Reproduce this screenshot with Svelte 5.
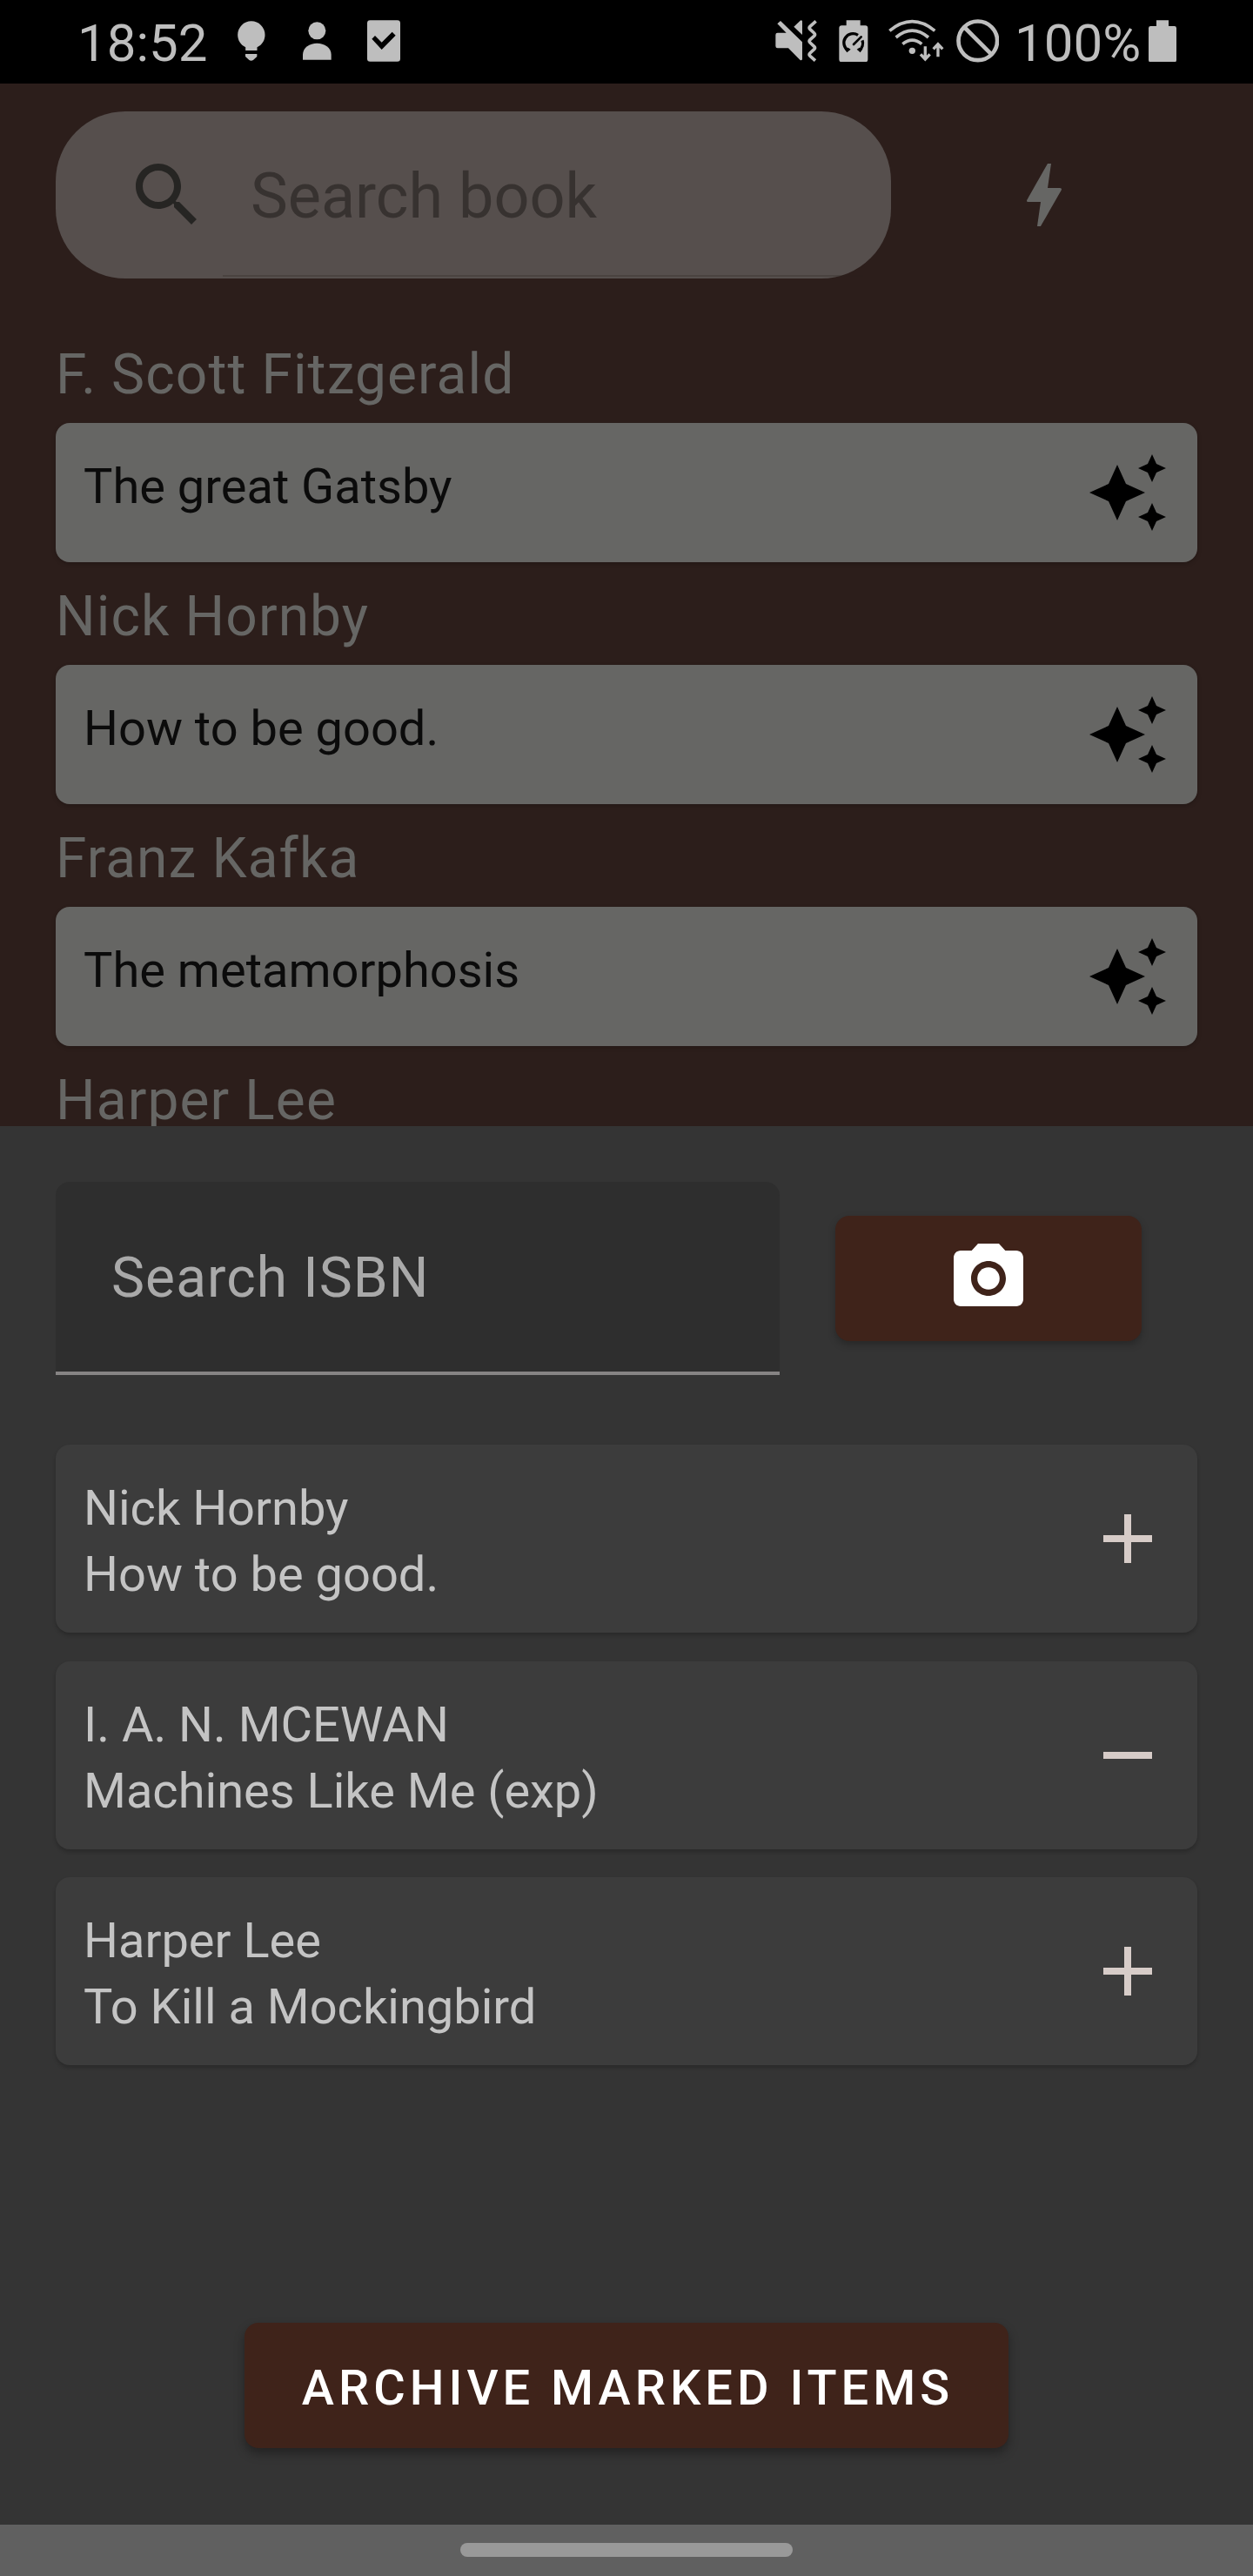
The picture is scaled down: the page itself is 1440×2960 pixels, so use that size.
<script>
  const shelf = [
    { author: 'F. Scott Fitzgerald', title: 'The great Gatsby' },
    { author: 'Nick Hornby', title: 'How to be good.' },
    { author: 'Franz Kafka', title: 'The metamorphosis' },
    { author: 'Harper Lee', title: null }
  ];

  const results = [
    { author: 'Nick Hornby', title: 'How to be good.', marked: false },
    { author: 'I. A. N. MCEWAN', title: 'Machines Like Me (exp)', marked: true },
    { author: 'Harper Lee', title: 'To Kill a Mockingbird', marked: false }
  ];
</script>

<div class="screen">
  <header class="status">
    <div class="status-left">
      <span class="clock">18:52</span>
      <svg class="bulb" viewBox="640 72 95 138">
        <path d="M687.500 73a47 47 0 0 1 47 47c0 18-9 34-27 43v11h-40v-11c-18-9-27-25-27-43a47 47 0 0 1 47-47zM667 186h40v9l-13 12q-7 5-14 0l-13-12z" />
      </svg>
      <svg class="person" viewBox="866 75 99 132">
        <circle cx="915" cy="106" r="30" />
        <path d="M866 206v-18c0-24 24-39 49-39s49 15 49 39v18z" />
      </svg>
      <svg class="check" viewBox="1086 69 114 144">
        <path fill-rule="evenodd" d="M1096 69.500h94q10 0 10 10v123q0 10-10 10h-94q-10 0-10-10v-123q0-10 10-10zM1102 134l11-11 23 23 36-36 12 12-48 49z" />
      </svg>
    </div>
    <div class="status-right">
      <svg class="mute" viewBox="93 67 148 147">
        <path d="M111 73l75 73v60q-3 5-8 1l-40-40h-37q-7 0-7-7v-39q0-7 7-7h30l-31-31zM157 93l22-21q5-3 7 2v47z" />
        <path class="line" stroke-width="11" stroke-linejoin="round" d="M233 74l-20 18q-5 5 0 10l14 13q5 5 0 10l-14 13q-5 5 0 10l14 13q5 5 0 10l-14 13q-5 5 0 10l18 16" />
      </svg>
      <svg class="saver" viewBox="313 68 101 146">
        <path d="M339 69h48v18h17q9 0 9 9v108q0 9-9 9h-81q-9 0-9-9V96q0-9 9-9h16z" />
        <g class="cut">
          <path stroke-width="10" d="M345 173a31 31 0 0 1 34-53M394 138a31 31 0 0 1-11 35" />
          <path stroke-width="8" stroke-linecap="round" d="M364 152l26-26" />
        </g>
        <path fill="#000" d="M333 168l8 12 13-11-9-6zM395 168l-8 12-12-11 9-6z" />
      </svg>
      <svg class="wifi" viewBox="483 67 193 147">
        <circle cx="565" cy="176" r="11" />
        <path class="line" stroke-width="11" d="M487 107q78-64 156 0M509 130q56-47 112 0M532 153q33-27 66 0" />
        <path class="line" stroke-width="10" d="M610 161v44M594 188l16 17 16-17M654 197v-43M638 170l16-17 16 17" />
      </svg>
      <svg class="block" viewBox="716 66 149 149">
        <circle class="line" cx="790.500" cy="140.500" r="67" stroke-width="14" />
        <path class="line" stroke-width="14" d="M743 93l95 95" />
      </svg>
      <span class="percent">100%</span>
      <svg class="battery" viewBox="1380 68 96 146">
        <path d="M1407 69h42v20h20q7 0 7 7v110q0 7-7 7h-82q-7 0-7-7V96q0-7 7-7h20z" />
      </svg>
    </div>
  </header>

  <main class="library">
    <div class="toolbar">
      <div class="search">
        <svg class="icon" viewBox="0 0 24 24">
          <path d="M15.500 14h-.79l-.28-.27C15.410 12.590 16 11.110 16 9.500 16 5.910 13.090 3 9.500 3S3 5.910 3 9.500 5.910 16 9.500 16c1.610 0 3.090-.59 4.230-1.570l.27.28v.79l5 4.990L20.490 19l-4.990-5zm-6 0C7.010 14 5 11.990 5 9.500S7.010 5 9.500 5 14 7.010 14 9.500 11.990 14 9.500 14z" />
        </svg>
        <span>Search book</span>
      </div>
      <svg class="icon bolt" viewBox="0 0 24 24">
        <path d="M11 21h-1l1-7H7.500c-.58 0-.57-.32-.38-.66.19-.34.05-.08.07-.12C8.480 10.940 10.420 7.540 13 3h1l-1 7h3.500c.49 0 .56.33.47.51l-.07.15C12.960 17.550 11 21 11 21z" />
      </svg>
    </div>

    <section class="shelf">
      {#each shelf as book}
        <h2>{book.author}</h2>
        {#if book.title}
          <article class="book">
            <p>{book.title}</p>
            <svg class="icon" viewBox="0 0 24 24">
              <path d="M19 9l1.250-2.750L23 5l-2.750-1.250L19 1l-1.250 2.750L15 5l2.750 1.250L19 9zm-7.500.5L9 4 6.500 9.500 1 12l5.500 2.500L9 20l2.500-5.500L17 12l-5.500-2.500zM19 15l-1.250 2.750L15 19l2.750 1.250L19 23l1.250-2.750L23 19l-2.750-1.250L19 15z" />
            </svg>
          </article>
        {/if}
      {/each}
    </section>
  </main>

  <section class="sheet">
    <div class="isbn-row">
      <div class="isbn">Search ISBN</div>
      <button class="scan" aria-label="Scan ISBN">
        <svg class="icon" viewBox="0 0 24 24">
          <circle cx="12" cy="12" r="3.200" />
          <path d="M9 2L7.170 4H4c-1.100 0-2 .9-2 2v12c0 1.100.9 2 2 2h16c1.100 0 2-.9 2-2V6c0-1.100-.9-2-2-2h-3.170L15 2H9zm3 15c-2.760 0-5-2.240-5-5s2.240-5 5-5 5 2.240 5 5-2.240 5-5 5z" />
        </svg>
      </button>
    </div>

    <div class="results">
      {#each results as item}
        <article class="result">
          <p>{item.author}<br />{item.title}</p>
          <svg class="icon" viewBox="0 0 24 24">
            <path d={item.marked ? 'M5 11h14v2H5z' : 'M19 13h-6v6h-2v-6H5v-2h6V5h2v6h6v2z'} />
          </svg>
        </article>
      {/each}
    </div>

    <button class="archive">ARCHIVE MARKED ITEMS</button>
  </section>

  <footer class="nav"><span></span></footer>
</div>

<style>
  :global(body) {
    margin: 0;
    background: #343434;
  }
  .screen {
    width: 1440px;
    height: 2960px;
    display: flex;
    flex-direction: column;
    overflow: hidden;
    font-family: Roboto, 'Liberation Sans', sans-serif;
  }
  h2,
  p {
    margin: 0;
    font-weight: 400;
  }
  button {
    border: 0;
    padding: 0;
    font-family: inherit;
    color: #fff;
    background: #3f231a;
    border-radius: 16px;
  }
  svg {
    display: block;
    flex: none;
    fill: currentColor;
  }
  .icon {
    width: 96px;
    height: 96px;
  }

  .status {
    height: 96px;
    flex: none;
    box-sizing: border-box;
    padding: 0 88px 0 89px;
    display: flex;
    justify-content: space-between;
    background: #000;
    color: #bebebe;
    font-size: 60px;
    line-height: 99px;
  }
  .status-left,
  .status-right {
    display: flex;
    align-items: flex-start;
  }
  .clock {
    width: 184px;
  }
  .bulb {
    width: 31.700px;
    height: 46px;
    margin-top: 24px;
  }
  .person {
    width: 33px;
    height: 44px;
    margin: 25px 0 0 43.700px;
  }
  .check {
    width: 38px;
    height: 48px;
    margin: 23px 0 0 40.300px;
  }
  .line {
    fill: none;
    stroke: currentColor;
  }
  .cut {
    fill: none;
    stroke: #000;
  }
  .mute {
    width: 49.300px;
    height: 49px;
    margin: 22.300px 24px 0 0;
  }
  .saver {
    width: 33.700px;
    height: 48.700px;
    margin: 22.700px 23px 0 0;
  }
  .wifi {
    width: 64.300px;
    height: 49px;
    margin: 22.300px 13.400px 0 0;
  }
  .block {
    width: 49.600px;
    height: 49.600px;
    margin: 22px 17.700px 0 0;
  }
  .percent {
    width: 154px;
    white-space: nowrap;
  }
  .battery {
    width: 32px;
    height: 48.700px;
    margin-top: 22.700px;
  }

  .library {
    height: 1198px;
    flex: none;
    box-sizing: border-box;
    padding: 32px 64px 0;
    overflow: hidden;
    background: #2c1e1b;
    color: #666664;
  }
  .toolbar {
    display: flex;
    align-items: center;
    gap: 128px;
    margin-bottom: 48px;
  }
  .search {
    position: relative;
    width: 960px;
    height: 192px;
    box-sizing: border-box;
    padding-left: 80px;
    display: flex;
    align-items: center;
    gap: 48px;
    border-radius: 80px;
    background: #564f4d;
    color: #262523;
    font-size: 72px;
  }
  .search span {
    padding-top: 3px;
    color: #373230;
  }
  /* Input underline, sitting just inside the pill's lower edge. */
  .search::after {
    content: '';
    position: absolute;
    left: 192px;
    right: 32px;
    bottom: 2px;
    height: 2px;
    background: rgba(40, 30, 26, 0.25);
  }
  .shelf h2 {
    height: 118px;
    font-size: 64px;
    line-height: 126px;
    letter-spacing: 1.100px;
  }
  .book,
  .result {
    box-sizing: border-box;
    display: flex;
    padding: 0 32px;
    justify-content: space-between;
    align-items: center;
    border-radius: 16px;
    font-size: 56px;
    line-height: 76px;
  }
  .book {
    height: 160px;
    background: #666664;
    color: #0b0b0b;
    box-shadow: 0 2px 5px rgba(0, 0, 0, 0.2);
  }
  .book p {
    padding-bottom: 14px;
  }
  .book .icon {
    color: #000;
  }

  .sheet {
    height: 1607px;
    flex: none;
    box-sizing: border-box;
    padding: 64px 64px 88px;
    display: flex;
    flex-direction: column;
    background: #343434;
  }
  .isbn-row {
    display: flex;
    align-items: center;
    gap: 64px;
  }
  .isbn {
    width: 832px;
    height: 222px;
    box-sizing: border-box;
    padding-left: 64px;
    border-bottom: 4px solid #868484;
    border-radius: 16px 16px 0 0;
    background: #2e2e2e;
    color: #a9a9a9;
    font-size: 64px;
    line-height: 222px;
    letter-spacing: 1.100px;
  }
  .scan {
    width: 352px;
    height: 144px;
    display: flex;
    align-items: center;
    justify-content: center;
    box-shadow: 0 4px 8px rgba(0, 0, 0, 0.25);
  }
  .results {
    margin-top: 80px;
    display: flex;
    flex-direction: column;
    gap: 32.500px;
  }
  .result {
    height: 216px;
    background: #3c3c3c;
    color: #c4c4c4;
    box-shadow: 0 3px 4px rgba(0, 0, 0, 0.2);
  }
  .result p {
    padding-top: 6px;
  }
  .result .icon {
    color: #d7ccc8;
  }
  .archive {
    align-self: center;
    margin-top: auto;
    width: 878px;
    height: 144px;
    padding: 6px 0 0 3px;
    font-size: 56px;
    font-weight: 500;
    letter-spacing: 5px;
    box-shadow: 0 6px 12px rgba(0, 0, 0, 0.35);
  }

  .nav {
    flex: 1;
    display: flex;
    justify-content: center;
    background: #606060;
  }
  .nav span {
    width: 382px;
    height: 16px;
    margin-top: 21px;
    border-radius: 8px;
    background: #999;
  }
</style>
